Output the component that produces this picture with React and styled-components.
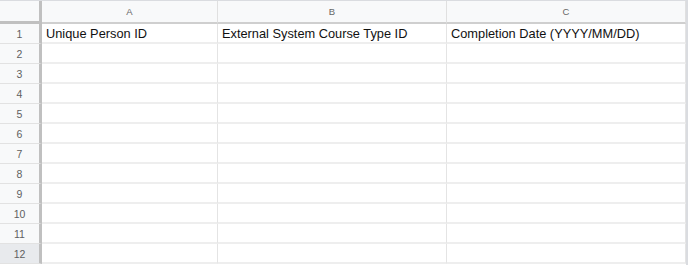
import React from "react";
import styled, { createGlobalStyle } from "styled-components";

const GlobalStyle = createGlobalStyle`
  html, body {
    margin: 0;
    padding: 0;
    background: #ffffff;
  }
  body {
    font-family: "Liberation Sans", Arial, sans-serif;
  }
`;

const columns = ["A", "B", "C"];
const headers = [
  "Unique Person ID",
  "External System Course Type ID",
  "Completion Date (YYYY/MM/DD)",
];
const rowCount = 12;

const Sheet = styled.div`
  display: grid;
  grid-template-columns: 42px 176px 229px 239px;
  grid-template-rows: 23px;
  grid-auto-rows: 20px;
  width: 686px;
  height: 264px;
  border-right: 2px solid #dadce0;
  border-top: 1px solid #dadce0;
  overflow: hidden;
`;

const Corner = styled.div`
  background: #f8f9fa;
  border-right: 3px solid #c0c0c0;
  border-bottom: 3px solid #c0c0c0;
  box-sizing: border-box;
`;

const ColHead = styled.div`
  display: flex;
  align-items: center;
  justify-content: center;
  background: #f8f9fa;
  border-right: 1px solid #e0e0e0;
  border-bottom: 2px solid #cfcfcf;
  box-sizing: border-box;
  color: #666;
  font-size: 9.5px;
`;

const RowHead = styled.div`
  display: flex;
  align-items: center;
  justify-content: center;
  background: ${(p) => (p.$active ? "#e8eaed" : "#f8f9fa")};
  border-right: 3px solid #c0c0c0;
  border-bottom: 1px solid #e2e2e2;
  box-sizing: border-box;
  color: #5f5f5f;
  font-size: 10.5px;
  padding-top: 1px;
`;

const Cell = styled.div`
  display: flex;
  align-items: center;
  padding: 1px 4px 0;
  border-right: 1px solid #e4e4e4;
  border-bottom: 2px solid #eeeeee;
  box-sizing: border-box;
  color: #111;
  font-size: 12.8px;
  white-space: nowrap;
  overflow: hidden;
`;

export default function App() {
  return (
    <>
      <GlobalStyle />
      <Sheet>
        <Corner />
        {columns.map((c) => (
          <ColHead key={c}>{c}</ColHead>
        ))}
        {Array.from({ length: rowCount }, (_, i) => (
          <React.Fragment key={i}>
            <RowHead $active={i === rowCount - 1}>{i + 1}</RowHead>
            {columns.map((c, j) => (
              <Cell key={c}>{i === 0 ? headers[j] : ""}</Cell>
            ))}
          </React.Fragment>
        ))}
      </Sheet>
    </>
  );
}
